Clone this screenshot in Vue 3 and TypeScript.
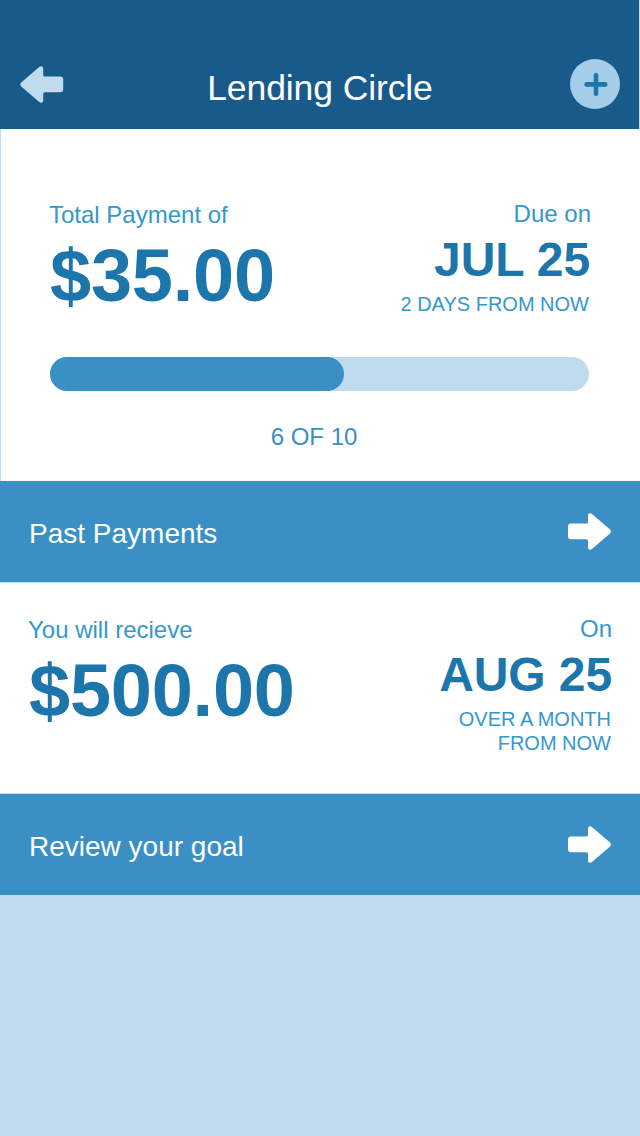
<script setup lang="ts">
interface Payment {
  label: string
  amount: string
  dateLabel: string
  date: string
  note: string[]
}

const due: Payment = {
  label: 'Total Payment of',
  amount: '$35.00',
  dateLabel: 'Due on',
  date: 'JUL 25',
  note: ['2 DAYS FROM NOW'],
}

const payout: Payment = {
  label: 'You will recieve',
  amount: '$500.00',
  dateLabel: 'On',
  date: 'AUG 25',
  note: ['OVER A MONTH', 'FROM NOW'],
}

const arrow =
  'M3 10.6H18.4Q20 10.6 20 9V2.2Q20 .2 22 .2Q23 .2 24 1L42 16.6Q44 18.5 42 20.4L24 36Q23 36.8 22 36.8Q20 36.8 20 34.8V27.8Q20 26.2 18.4 26.2H3Q0 26.2 0 23.2V13.6Q0 10.6 3 10.6Z'
const progress = 294 / 539
</script>

<template>
  <div class="screen">
    <header class="header">
      <button class="icon-button back" aria-label="Back">
        <svg width="44" height="38" viewBox="0 0 44 38"><path :d="arrow" transform="translate(43.2 0) scale(-1 1)" /></svg>
      </button>
      <h1 class="title">Lending Circle</h1>
      <button class="icon-button add" aria-label="Add">
        <svg width="50" height="50" viewBox="0 0 50 50">
          <circle cx="25" cy="25" r="25" />
          <path d="M16.6 25.4H35.2M26 16.2V34.8" />
        </svg>
      </button>
    </header>

    <section class="panel due">
      <div class="summary">
        <div class="left">
          <div class="label">{{ due.label }}</div>
          <div class="amount">{{ due.amount }}</div>
        </div>
        <div class="right">
          <div class="label">{{ due.dateLabel }}</div>
          <div class="date">{{ due.date }}</div>
          <div v-for="line in due.note" :key="line" class="note">{{ line }}</div>
        </div>
      </div>
      <div class="track"><div class="fill" :style="{ width: progress * 100 + '%' }"></div></div>
      <div class="count">6 OF 10</div>
    </section>

    <a class="link">
      <span class="past">Past Payments</span>
      <svg width="44" height="38" viewBox="0 0 44 38"><path :d="arrow" /></svg>
    </a>

    <section class="panel payout">
      <div class="summary">
        <div class="left">
          <div class="label">{{ payout.label }}</div>
          <div class="amount">{{ payout.amount }}</div>
        </div>
        <div class="right">
          <div class="label">{{ payout.dateLabel }}</div>
          <div class="date">{{ payout.date }}</div>
          <div v-for="line in payout.note" :key="line" class="note">{{ line }}</div>
        </div>
      </div>
    </section>

    <a class="link">
      <span class="review">Review your goal</span>
      <svg width="44" height="38" viewBox="0 0 44 38"><path :d="arrow" /></svg>
    </a>
  </div>
</template>

<style>
body {
  margin: 0;
}
</style>

<style scoped>
.screen {
  box-sizing: border-box;
  width: 640px;
  height: 1136px;
  overflow: hidden;
  background: #c0dbed;
  font-family: 'Liberation Sans', Arial, sans-serif;
  white-space: nowrap;
}
.header {
  box-sizing: border-box;
  width: 639px;
  height: 129px;
  padding: 59px 19px 0 20px;
  display: flex;
  justify-content: space-between;
  align-items: flex-start;
  background: #185b8b;
}
.icon-button {
  padding: 0;
  border: 0;
  background: none;
  line-height: 0;
}
.icon-button svg,
.link svg {
  display: block;
}
.back {
  width: 50px;
  padding-top: 7px;
}
.back path {
  fill: #c0dbed;
}
.add circle {
  fill: #a5cde8;
}
.add path {
  fill: none;
  stroke: #1c76ac;
  stroke-width: 4.6;
  stroke-linecap: round;
}
.title {
  margin: 0;
  padding-top: 8px;
  font-size: 35.5px;
  line-height: 42px;
  font-weight: 400;
  letter-spacing: -0.1px;
  color: #fff;
}
.panel {
  box-sizing: border-box;
  background: #fff;
}
.due {
  height: 352px;
  padding: 68px 50px 0 49px;
  border-left: 1px solid #c0dbed;
}
.payout {
  height: 210px;
  margin: 1px 0;
  padding: 29px 28px 0 29px;
}
.summary {
  display: flex;
  justify-content: space-between;
}
.left {
  padding-top: 1px;
}
.right {
  text-align: right;
}
.label {
  font-size: 24px;
  line-height: 34px;
  color: #3498cb;
}
.left .label {
  margin-left: -1px;
}
.due .right .label {
  margin-right: -1px;
}
.amount {
  font-size: 74px;
  line-height: 88px;
  font-weight: 700;
  letter-spacing: -0.25px;
  color: #1c76ac;
}
.date {
  margin-bottom: 4px;
  font-size: 48px;
  line-height: 57px;
  font-weight: 700;
  letter-spacing: -0.1px;
  color: #1c76ac;
}
.note {
  margin-right: 1px;
  font-size: 20px;
  line-height: 24px;
  color: #3498cb;
}
.track {
  width: 539px;
  height: 34px;
  margin-top: 37px;
  border-radius: 17px;
  background: #c0dbed;
}
.fill {
  height: 100%;
  border-radius: 17px;
  background: #3a90c5;
}
.count {
  width: 528px;
  margin-top: 29px;
  font-size: 24px;
  line-height: 34px;
  text-align: center;
  color: #3a90c5;
}
.link {
  box-sizing: border-box;
  height: 101px;
  padding: 0 28px 0 29px;
  display: flex;
  justify-content: space-between;
  align-items: center;
  background: #3a90c5;
  font-size: 28px;
  line-height: 34px;
  color: #fff;
}
.link span {
  padding-top: 4px;
}
.link path {
  fill: #fff;
}
</style>
